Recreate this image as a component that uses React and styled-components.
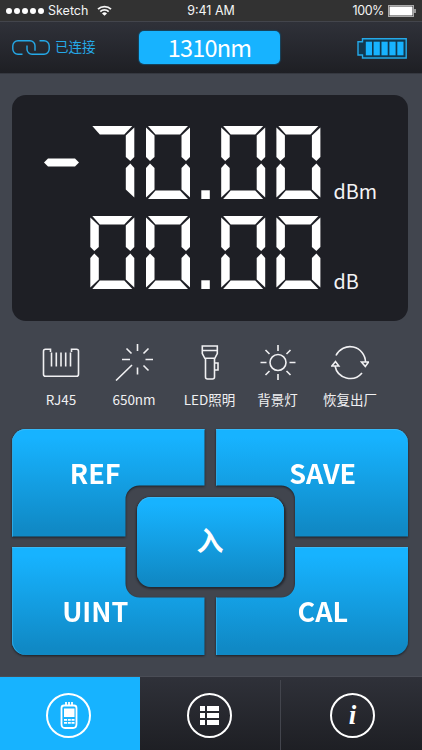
import React from 'react'
import styled, { createGlobalStyle } from 'styled-components'

const blue = '#17b3ff'
const cjk = '"Noto Sans CJK SC", "Noto Sans", sans-serif'

const GlobalStyle = createGlobalStyle`
  body {
    margin: 0;
    background: #41454e;
    font-family: ${cjk};
    color: white;
  }
`
const Screen = styled.div`
  display: flex;
  flex-direction: column;
  width: 422px;
  height: 750px;
  overflow: hidden;
  background: #41454e;
`
const StatusBar = styled.div`
  display: grid;
  grid-template-columns: 1fr auto 1fr;
  align-items: center;
  box-sizing: border-box;
  height: 21px;
  padding: 0 6px;
  background: #323232;
  font: 12.5px/21px Inter, sans-serif;
  color: #f4f4f4;
`
const StatusGroup = styled.div`
  display: flex;
  align-items: center;
  justify-content: ${p => (p.$end ? 'flex-end' : 'flex-start')};
  gap: ${p => (p.$end ? 4 : 0)}px;
  letter-spacing: ${p => (p.$end ? '-0.4px' : 'normal')};
`
const Carrier = styled.span`
  margin: 0 9px 0 4px;
`
const Header = styled.header`
  display: grid;
  grid-template-columns: 127px 141px 1fr;
  align-items: center;
  box-sizing: border-box;
  height: 52px;
  padding: 0 15px 0 12px;
  border-top: 1px solid #43454c;
  background: linear-gradient(#2f3139, #1e1f24);
  box-shadow: 0 1px 0 #353840;
`
const Connection = styled.div`
  display: flex;
  align-items: center;
  gap: 5px;
  color: #25a9e8;
  font-size: 13.5px;
  line-height: 20px;
`
const ConnectionLabel = styled.span`
  padding-bottom: 3px;
`
const Wavelength = styled.button`
  height: 33px;
  padding: 0 0 1px;
  border: 0;
  border-radius: 5px;
  background: ${blue};
  box-shadow: 0 0 1px 1px #164560;
  color: white;
  font: 23.5px/32px ${cjk};
  letter-spacing: -0.8px;
`
const HeaderBattery = styled.div`
  display: flex;
  justify-content: flex-end;
  padding-top: 2px;
`
const Display = styled.section`
  display: flex;
  flex-direction: column;
  gap: 17px;
  box-sizing: border-box;
  height: 226px;
  margin: 22px 14px 0 12px;
  padding: 31px 0 0 32px;
  border-radius: 14px;
  background: #1e1f25;
`
const Reading = styled.div`
  display: flex;
  align-items: flex-end;
  gap: 13px;
  height: 73px;
`
const Unit = styled.span`
  font-size: 19.8px;
  line-height: 20px;
  margin-bottom: -2px;
  color: #f3f3f5;
`
const Tools = styled.nav`
  display: grid;
  grid-template-columns: 74px 72px 79px 57px 88px;
  padding: 22px 0 0 24px;
  height: 86px;
`
const Tool = styled.div`
  display: flex;
  flex-direction: column;
  align-items: center;
  gap: 8px;
  color: #f0f0f2;
  font-size: 13.5px;
  line-height: 20px;
  white-space: nowrap;
`
const Keypad = styled.section`
  position: relative;
  display: grid;
  grid-template-columns: 192.5px 192.5px;
  grid-template-rows: 107.5px 108px;
  gap: 10.5px 11px;
  padding-left: 12px;
`
const KeyShadow = styled.div`
  display: grid;
  filter: drop-shadow(0.5px 1px 1px rgba(10, 14, 20, 0.7));
`
const Key = styled.button`
  padding: ${p => p.$pad};
  border: 0;
  border-radius: ${p => p.$radius};
  background: linear-gradient(${blue} 8%, #1089c5 94%);
  box-shadow: inset 0 1px 0 #36b9f7, inset 1px 0 0 #2ba9e5;
  clip-path: path('${p => p.$shape}');
  color: white;
  font: bold 27px/30px ${cjk};
`
// floats over the notch left by the four keys
const CenterKey = styled.button`
  position: absolute;
  left: 136.5px;
  top: 67.5px;
  width: 147px;
  height: 90.5px;
  padding: 0 0 4px;
  border: 0;
  border-radius: 14px;
  background: linear-gradient(${blue} 8%, #1089c5 94%);
  box-shadow: inset 0 1px 0 #36b9f7, 0.5px 1px 2px 1px rgba(10, 14, 20, 0.5);
  color: white;
  font: bold 27px/86px ${cjk};
`
const TabBar = styled.footer`
  display: grid;
  grid-template-columns: 139.5px 140.5px 1fr;
  height: 73px;
  margin-top: auto;
  background: linear-gradient(#2f3139, #1e1f24);
  box-shadow: 0 -1px 0 #4a4d56;
`
const Tab = styled.div`
  display: flex;
  align-items: center;
  justify-content: center;
  box-sizing: border-box;
  padding: 3px ${p => p.$nudge || 0}px 0 0;
  background: ${p => (p.$active ? blue : 'none')};
  border-left: ${p => (p.$line ? '1px solid' : '0')};
  border-image: linear-gradient(transparent 4px, #43454d 4px) 1;
`
const Ring = styled.div`
  display: grid;
  place-items: center;
  box-sizing: border-box;
  width: 45px;
  height: 45px;
  margin-left: ${p => p.$shift || 0}px;
  border: 2px solid white;
  border-radius: 50%;
`
const Info = styled.i`
  font: italic bold 27px/38px "Liberation Serif", serif;
`

const Icon = ({ w, h, children, ...rest }) => (
  <svg
    width={w}
    height={h}
    viewBox={`0 0 ${w} ${h}`}
    fill="none"
    stroke="currentColor"
    strokeWidth="1.6"
    {...rest}
  >
    {children}
  </svg>
)

const SEGMENTS = {
  a: '2,0 42,0 34,8.5 9.5,8.5',
  b: '44,1.5 44,31 40,35 35.5,31 35.5,9.5',
  c: '40,37.5 44,42 44,71.5 35.5,63.5 35.5,42',
  d: '9.5,64.5 34,64.5 42,73 2,73',
  e: '4,37.5 8.5,42 8.5,63.5 0,71.5 0,42',
  f: '0,1.5 8.5,9.5 8.5,31 4,35 0,31',
}
const LIT = { 0: 'abcdef', 7: 'abc' }

const Digit = ({ value, x }) => (
  <g transform={`translate(${x} 0)`}>
    {LIT[value].split('').map(s => (
      <polygon key={s} points={SEGMENTS[s]} />
    ))}
  </g>
)

const Digits = ({ values, negative }) => (
  <Icon w={276.5} h={73} fill="white" stroke="none">
    {negative && <polygon points="0,36.5 4,32.5 31,32.5 35,36.5 31,40.5 4,40.5" />}
    <Digit value={values[0]} x={46.3} />
    <Digit value={values[1]} x={102} />
    <rect x="157.3" y="64.3" width="8.5" height="8.7" />
    <Digit value={values[2]} x={177.2} />
    <Digit value={values[3]} x={232.4} />
  </Icon>
)

const Keys = [
  ['REF', '14px 0 0 0', '0 26px 19px 0', 'M0 0H192.5V56.5H127.5a14 14 0 0 0-14 14V107.5H0Z'],
  ['SAVE', '0 14px 0 0', '0 0 19px 22px', 'M0 0H192.5V107.5H79.5V70.5a14 14 0 0 0-14-14H0Z'],
  ['UINT', '0 0 0 14px', '20px 26px 0 0', 'M0 0H113.5V36.5a14 14 0 0 0 14 14H192.5V108H0Z'],
  ['CAL', '0 0 14px 0', '20px 0 0 22px', 'M79.5 0H192.5V108H0V50.5H65.5a14 14 0 0 0 14-14Z'],
]

const App = () => (
  <Screen>
    <GlobalStyle />
    <StatusBar>
      <StatusGroup>
        <Icon w={38} h={8} fill="white" stroke="none">
          {[3, 11, 19, 27, 35].map(x => (
            <circle key={x} cx={x} cy="4" r="3" />
          ))}
        </Icon>
        <Carrier>Sketch</Carrier>
        <Icon w={15} h={11} strokeWidth="1.8">
          <path d="M1 4.2a9.3 9.3 0 0 1 13 0M3.3 6.6a6 6 0 0 1 8.4 0" />
          <path d="M7.5 10.8 5 8.4a3.6 3.6 0 0 1 5 0Z" fill="white" stroke="none" />
        </Icon>
      </StatusGroup>
      <span>9:41 AM</span>
      <StatusGroup $end>
        <span>100%</span>
        <Icon w={28} h={12} strokeWidth="1">
          <rect x=".5" y=".5" width="25" height="11" stroke="#aaa" />
          <rect x="1.5" y="1.5" width="23" height="9" fill="white" stroke="none" />
          <path d="M26.5 4h1v4h-1z" fill="white" stroke="none" />
        </Icon>
      </StatusGroup>
    </StatusBar>
    <Header>
      <Connection>
        <Icon w={38} h={16} strokeWidth="1.4">
          <path d="M10.5 14.3H6a5.2 5.2 0 0 1-5.2-5.2V6A5.2 5.2 0 0 1 6 .8h12a5 5 0 0 1 5 5v5" />
          <path d="M27.5.8H32A5.2 5.2 0 0 1 37.2 6v3.1a5.2 5.2 0 0 1-5.2 5.2H20a5 5 0 0 1-5-5V5.5" />
        </Icon>
        <ConnectionLabel>已连接</ConnectionLabel>
      </Connection>
      <Wavelength>1310nm</Wavelength>
      <HeaderBattery>
        <Icon w={50} h={21} stroke="#25a9e8" strokeWidth="1.4">
          <path d="M5.5 3.8V.8H49.2V20H5.5V17H1V3.8Z" fill="#12384f" />
          {[8.8, 16.6, 24.5, 32.4, 40.3].map(x => (
            <rect key={x} x={x} y="3.7" width="6.2" height="13.6" fill={blue} stroke="none" />
          ))}
        </Icon>
      </HeaderBattery>
    </Header>
    <Display>
      <Reading>
        <Digits values={[7, 0, 0, 0]} negative />
        <Unit>dBm</Unit>
      </Reading>
      <Reading>
        <Digits values={[0, 0, 0, 0]} />
        <Unit>dB</Unit>
      </Reading>
    </Display>
    <Tools>
      <Tool>
        <Icon w={38} h={38}>
          <path d="M8.5 9V6.3h-5a2 2 0 0 0-2 2v23a2 2 0 0 0 2 2h31a2 2 0 0 0 2-2v-23a2 2 0 0 0-2-2h-5V9" />
          <path d="M9.5 9.500v14M14.3 9.500v14M19 9.500v14M23.7 9.500v14M28.5 9.500v14" />
        </Icon>
        RJ45
      </Tool>
      <Tool>
        <Icon w={38} h={38}>
          <path d="M1 37.5 17 22M22.500 1v7M22.500 24.500v7M7 16.500h8M30.500 16.500h8M11.500 5.500l5 5M33.500 5.500l-5 5M33.500 27.500l-5-5" />
        </Icon>
        650nm
      </Tool>
      <Tool>
        <Icon w={38} h={38}>
          <path d="M11.3 3h15v7.500l-2.500 4.800h-10l-2.500-4.800ZM11.3 7.500h15" />
          <path d="M14.500 15.500V34a2 2 0 0 0 2 2h5a2 2 0 0 0 2-2V15.500M23.500 20h3.500v7h-3.500" />
        </Icon>
        LED照明
      </Tool>
      <Tool>
        <Icon w={38} h={38}>
          <circle cx="19" cy="19.5" r="8" />
          <path d="M19 2v6M19 31v6M1.500 19.500h6M30.500 19.500h6M6.500 7l4 4M31.500 7l-4 4M6.500 32l4-4M31.500 32l-4-4" />
        </Icon>
        背景灯
      </Tool>
      <Tool>
        <Icon w={38} h={38}>
          <path d="M5 12.500A15.500 15.500 0 0 1 34.500 19M31 30A15.500 15.500 0 0 1 4 23" />
          <path d="M30.500 19h7l-3.200 4.500ZM.8 23h7l-3.300-4.500Z" />
        </Icon>
        恢复出厂
      </Tool>
    </Tools>
    <Keypad>
      {Keys.map(([label, radius, pad, shape]) => (
        <KeyShadow key={label}>
          <Key $radius={radius} $pad={pad} $shape={shape}>
            {label}
          </Key>
        </KeyShadow>
      ))}
      <CenterKey>入</CenterKey>
    </Keypad>
    <TabBar>
      <Tab $active $nudge={2}>
        <Ring>
          <Icon w={18} h={29} strokeWidth="1.8">
            <path d="M4 4.500h10q2.500 0 2.500 2.500v16q0 4-3.500 4H5q-3.500 0-3.500-4V7q0-2.500 2.500-2.500Z" />
            <path d="M6 1v4M9 1v4M12 1v4" />
            <path d="M4 7.500h10.500v8.500H4zM4 18h3v1.800H4zM7.800 18h3v1.800h-3zM11.500 18h3v1.800h-3zM4 21h3v1.800H4zM7.800 21h3v1.800h-3zM11.500 21h3v1.800h-3z" fill="white" stroke="none" />
          </Icon>
        </Ring>
      </Tab>
      <Tab>
        <Ring>
          <Icon w={19} h={19} fill="white" stroke="none">
            <path d="M0 0h5v5H0zM7 0h12v5H7zM0 7h5v5H0zM7 7h12v5H7zM0 14h5v5H0zM7 14h12v5H7z" />
          </Icon>
        </Ring>
      </Tab>
      <Tab $line>
        <Ring $shift={2}>
          <Info>i</Info>
        </Ring>
      </Tab>
    </TabBar>
  </Screen>
)

export default App
